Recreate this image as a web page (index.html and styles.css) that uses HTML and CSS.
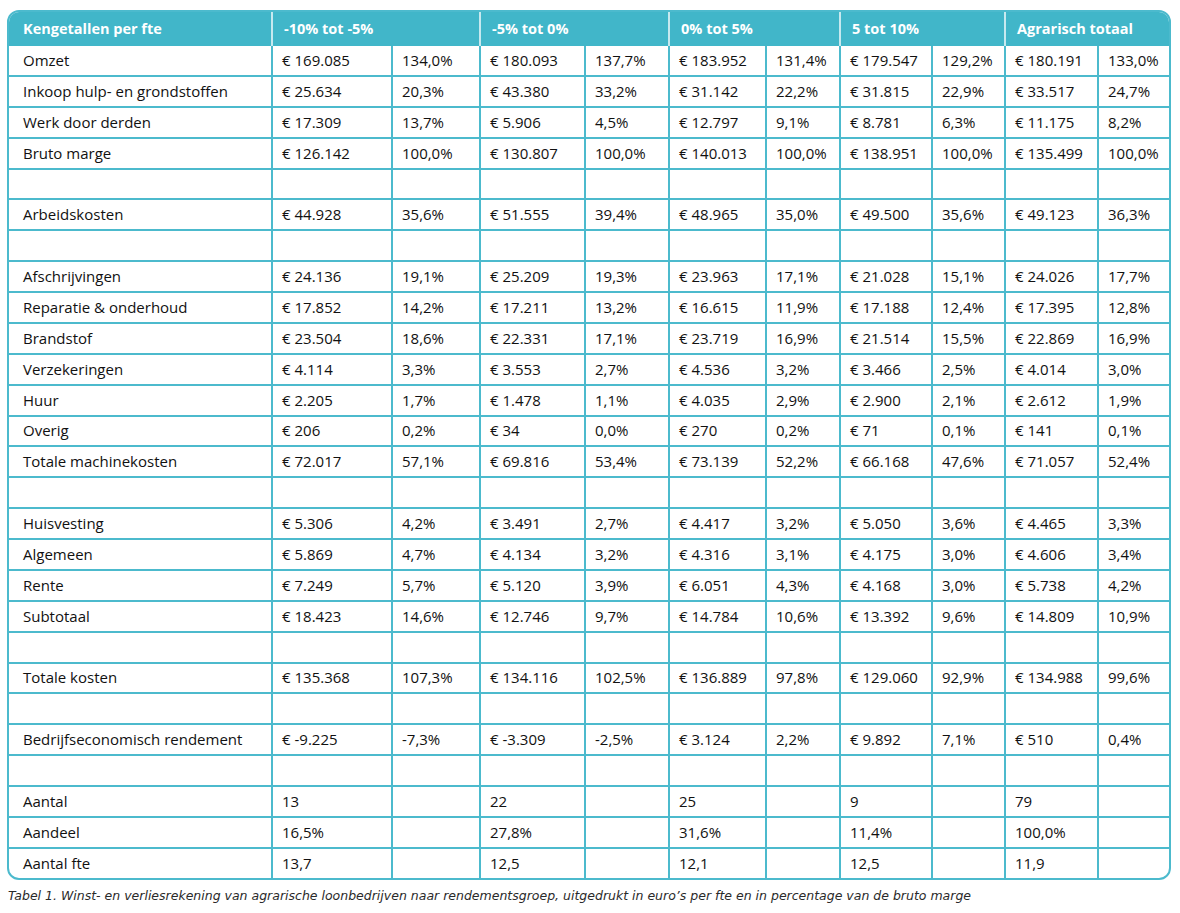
FILE: index.html
```html
<!DOCTYPE html>
<html lang="nl">
<head>
<meta charset="utf-8">
<title>Kengetallen per fte</title>
<link rel="stylesheet" href="styles.css">
</head>
<body>
<div class="frame">
<table class="kt">
<colgroup>
<col class="c0"><col class="c1"><col class="c2"><col class="c3"><col class="c4"><col class="c5"><col class="c6"><col class="c7"><col class="c8"><col class="c9"><col class="c10">
</colgroup>
<thead>
<tr><th>Kengetallen per fte</th><th colspan="2">-10% tot -5%</th><th colspan="2">-5% tot 0%</th><th colspan="2">0% tot 5%</th><th colspan="2">5 tot 10%</th><th colspan="2">Agrarisch totaal</th></tr>
</thead>
<tbody>
<tr><td>Omzet</td><td>€ 169.085</td><td>134,0%</td><td>€ 180.093</td><td>137,7%</td><td>€ 183.952</td><td>131,4%</td><td>€ 179.547</td><td>129,2%</td><td>€ 180.191</td><td>133,0%</td></tr>
<tr><td>Inkoop hulp- en grondstoffen</td><td>€ 25.634</td><td>20,3%</td><td>€ 43.380</td><td>33,2%</td><td>€ 31.142</td><td>22,2%</td><td>€ 31.815</td><td>22,9%</td><td>€ 33.517</td><td>24,7%</td></tr>
<tr><td>Werk door derden</td><td>€ 17.309</td><td>13,7%</td><td>€ 5.906</td><td>4,5%</td><td>€ 12.797</td><td>9,1%</td><td>€ 8.781</td><td>6,3%</td><td>€ 11.175</td><td>8,2%</td></tr>
<tr><td>Bruto marge</td><td>€ 126.142</td><td>100,0%</td><td>€ 130.807</td><td>100,0%</td><td>€ 140.013</td><td>100,0%</td><td>€ 138.951</td><td>100,0%</td><td>€ 135.499</td><td>100,0%</td></tr>
<tr><td></td><td></td><td></td><td></td><td></td><td></td><td></td><td></td><td></td><td></td><td></td></tr>
<tr><td>Arbeidskosten</td><td>€ 44.928</td><td>35,6%</td><td>€ 51.555</td><td>39,4%</td><td>€ 48.965</td><td>35,0%</td><td>€ 49.500</td><td>35,6%</td><td>€ 49.123</td><td>36,3%</td></tr>
<tr><td></td><td></td><td></td><td></td><td></td><td></td><td></td><td></td><td></td><td></td><td></td></tr>
<tr><td>Afschrijvingen</td><td>€ 24.136</td><td>19,1%</td><td>€ 25.209</td><td>19,3%</td><td>€ 23.963</td><td>17,1%</td><td>€ 21.028</td><td>15,1%</td><td>€ 24.026</td><td>17,7%</td></tr>
<tr><td>Reparatie &amp; onderhoud</td><td>€ 17.852</td><td>14,2%</td><td>€ 17.211</td><td>13,2%</td><td>€ 16.615</td><td>11,9%</td><td>€ 17.188</td><td>12,4%</td><td>€ 17.395</td><td>12,8%</td></tr>
<tr><td>Brandstof</td><td>€ 23.504</td><td>18,6%</td><td>€ 22.331</td><td>17,1%</td><td>€ 23.719</td><td>16,9%</td><td>€ 21.514</td><td>15,5%</td><td>€ 22.869</td><td>16,9%</td></tr>
<tr><td>Verzekeringen</td><td>€ 4.114</td><td>3,3%</td><td>€ 3.553</td><td>2,7%</td><td>€ 4.536</td><td>3,2%</td><td>€ 3.466</td><td>2,5%</td><td>€ 4.014</td><td>3,0%</td></tr>
<tr><td>Huur</td><td>€ 2.205</td><td>1,7%</td><td>€ 1.478</td><td>1,1%</td><td>€ 4.035</td><td>2,9%</td><td>€ 2.900</td><td>2,1%</td><td>€ 2.612</td><td>1,9%</td></tr>
<tr><td>Overig</td><td>€ 206</td><td>0,2%</td><td>€ 34</td><td>0,0%</td><td>€ 270</td><td>0,2%</td><td>€ 71</td><td>0,1%</td><td>€ 141</td><td>0,1%</td></tr>
<tr><td>Totale machinekosten</td><td>€ 72.017</td><td>57,1%</td><td>€ 69.816</td><td>53,4%</td><td>€ 73.139</td><td>52,2%</td><td>€ 66.168</td><td>47,6%</td><td>€ 71.057</td><td>52,4%</td></tr>
<tr><td></td><td></td><td></td><td></td><td></td><td></td><td></td><td></td><td></td><td></td><td></td></tr>
<tr><td>Huisvesting</td><td>€ 5.306</td><td>4,2%</td><td>€ 3.491</td><td>2,7%</td><td>€ 4.417</td><td>3,2%</td><td>€ 5.050</td><td>3,6%</td><td>€ 4.465</td><td>3,3%</td></tr>
<tr><td>Algemeen</td><td>€ 5.869</td><td>4,7%</td><td>€ 4.134</td><td>3,2%</td><td>€ 4.316</td><td>3,1%</td><td>€ 4.175</td><td>3,0%</td><td>€ 4.606</td><td>3,4%</td></tr>
<tr><td>Rente</td><td>€ 7.249</td><td>5,7%</td><td>€ 5.120</td><td>3,9%</td><td>€ 6.051</td><td>4,3%</td><td>€ 4.168</td><td>3,0%</td><td>€ 5.738</td><td>4,2%</td></tr>
<tr><td>Subtotaal</td><td>€ 18.423</td><td>14,6%</td><td>€ 12.746</td><td>9,7%</td><td>€ 14.784</td><td>10,6%</td><td>€ 13.392</td><td>9,6%</td><td>€ 14.809</td><td>10,9%</td></tr>
<tr><td></td><td></td><td></td><td></td><td></td><td></td><td></td><td></td><td></td><td></td><td></td></tr>
<tr><td>Totale kosten</td><td>€ 135.368</td><td>107,3%</td><td>€ 134.116</td><td>102,5%</td><td>€ 136.889</td><td>97,8%</td><td>€ 129.060</td><td>92,9%</td><td>€ 134.988</td><td>99,6%</td></tr>
<tr><td></td><td></td><td></td><td></td><td></td><td></td><td></td><td></td><td></td><td></td><td></td></tr>
<tr><td>Bedrijfseconomisch rendement</td><td>€ -9.225</td><td>-7,3%</td><td>€ -3.309</td><td>-2,5%</td><td>€ 3.124</td><td>2,2%</td><td>€ 9.892</td><td>7,1%</td><td>€ 510</td><td>0,4%</td></tr>
<tr><td></td><td></td><td></td><td></td><td></td><td></td><td></td><td></td><td></td><td></td><td></td></tr>
<tr><td>Aantal</td><td>13</td><td></td><td>22</td><td></td><td>25</td><td></td><td>9</td><td></td><td>79</td><td></td></tr>
<tr><td>Aandeel</td><td>16,5%</td><td></td><td>27,8%</td><td></td><td>31,6%</td><td></td><td>11,4%</td><td></td><td>100,0%</td><td></td></tr>
<tr><td>Aantal fte</td><td>13,7</td><td></td><td>12,5</td><td></td><td>12,1</td><td></td><td>12,5</td><td></td><td>11,9</td><td></td></tr>
</tbody>
</table>
</div>
<p class="caption">Tabel 1. Winst- en verliesrekening van agrarische loonbedrijven naar rendementsgroep, uitgedrukt in euro’s per fte en in percentage van de bruto marge</p>
</body>
</html>
```
FILE: styles.css
```css
html, body {
  margin: 0;
  padding: 0;
  background: #ffffff;
}
body {
  padding: 10px 8px 0 7px;
  font-family: "Open Sans", "Liberation Sans", sans-serif;
  color: #111111;
}
.frame {
  width: 1164px;
  box-sizing: border-box;
  border: 2px solid #4cbacd;
  border-radius: 12px;
  overflow: hidden;
}
.kt {
  width: 100%;
  border-collapse: collapse;
  table-layout: fixed;
}
.c0 { width: 263px; }
.c1 { width: 120px; }
.c2 { width: 88px; }
.c3 { width: 105px; }
.c4 { width: 84px; }
.c5 { width: 97px; }
.c6 { width: 74px; }
.c7 { width: 92px; }
.c8 { width: 73px; }
.c9 { width: 93px; }
.c10 { width: 73px; }
.kt th {
  background: #41b6c9;
  color: #ffffff;
  font-weight: 700;
  font-size: 14.5px;
  text-align: left;
  height: 33px;
  padding: 0 0 1px 11px;
  border-left: 2px solid #c7e9ef;
  white-space: nowrap;
}
.kt th:first-child {
  border-left: none;
  padding-left: 14px;
}
.kt td {
  font-size: 15px;
  height: 28.88px;
  padding: 0 0 0 9px;
  border-left: 2px solid #4cbacd;
  border-top: 2px solid #4cbacd;
  white-space: nowrap;
  line-height: 1;
}
.kt td:first-child {
  border-left: none;
  padding-left: 14px;
}
.kt tbody tr:first-child td {
  border-top: none;
}
.caption {
  margin: 8px 0 0 1px;
  font-family: "DejaVu Sans", sans-serif;
  font-style: italic;
  font-size: 12.5px;
  color: #2a2a2a;
}
```
